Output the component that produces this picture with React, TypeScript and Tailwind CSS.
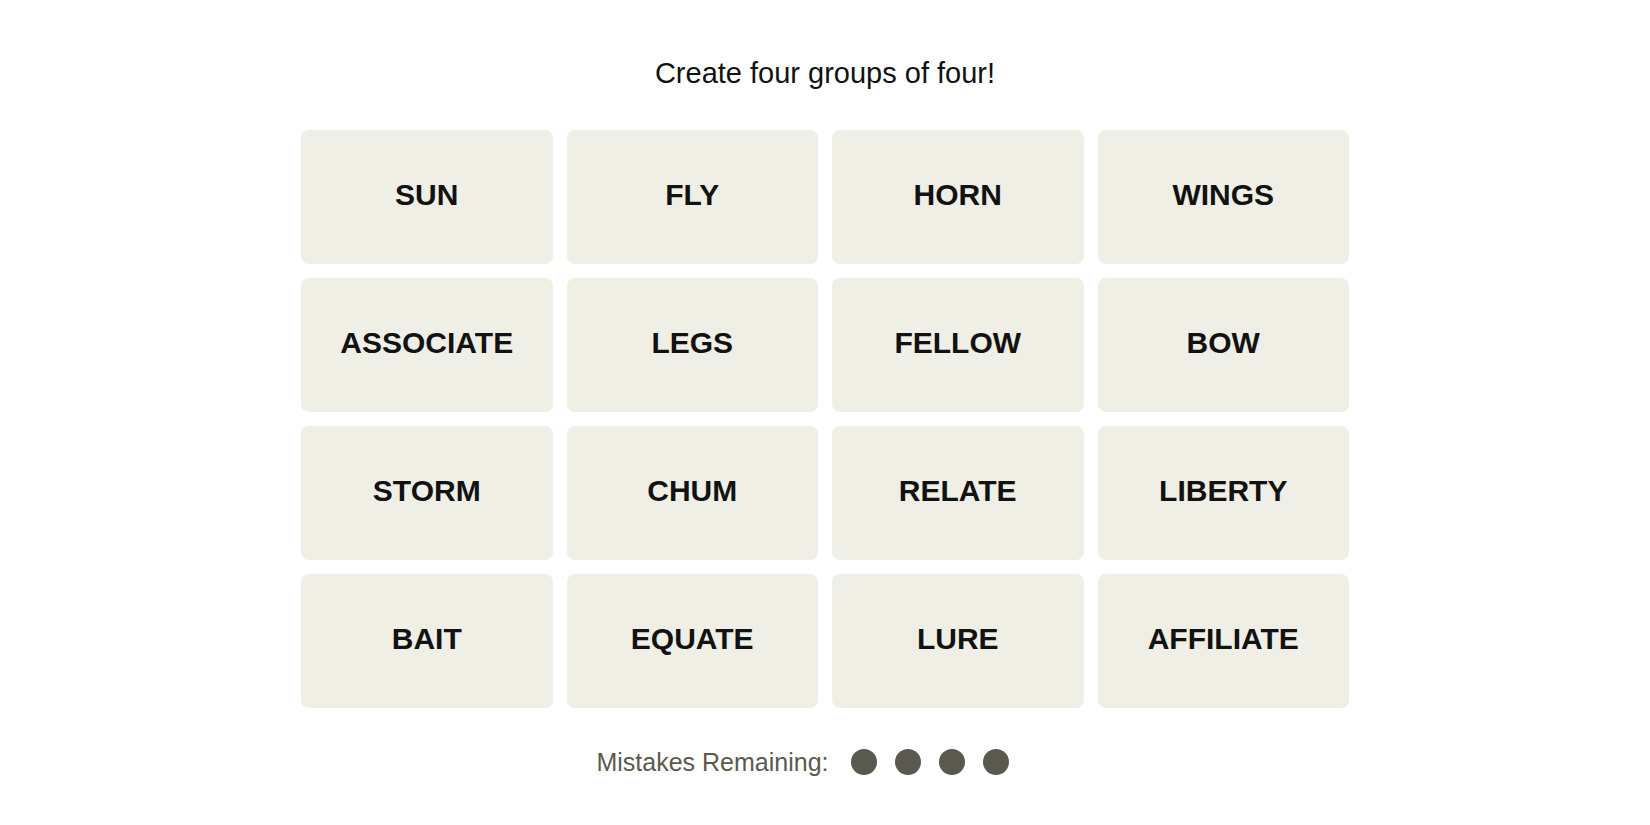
const words = [
  'SUN', 'FLY', 'HORN', 'WINGS',
  'ASSOCIATE', 'LEGS', 'FELLOW', 'BOW',
  'STORM', 'CHUM', 'RELATE', 'LIBERTY',
  'BAIT', 'EQUATE', 'LURE', 'AFFILIATE',
];

export default function App() {
  return (
    <div className="flex min-h-screen w-full flex-col items-center bg-white font-['Liberation_Sans',Arial,sans-serif] text-[#121212]">
      {/* heading */}
      <p className="mt-[55px] h-9 text-[29px] leading-9">Create four groups of four!</p>

      {/* board */}
      <div className="mt-[39px] grid w-[1048px] grid-cols-4 gap-[14px]">
        {words.map((w) => (
          <button
            key={w}
            className="flex h-[134px] items-center justify-center rounded-lg bg-[#efefe6] pb-[5px] text-[30px] font-bold uppercase text-[#121212]"
          >
            {w}
          </button>
        ))}
      </div>

      {/* mistakes */}
      <div className="mt-[41px] flex h-[26px] items-center pr-[45px]">
        <span className="text-[25px] leading-none text-[#5a594e]">Mistakes Remaining:</span>
        <div className="ml-[22px] flex gap-[18px]">
          {[0, 1, 2, 3].map((i) => (
            <span key={i} className="h-[26px] w-[26px] rounded-full bg-[#5a594e]" />
          ))}
        </div>
      </div>
    </div>
  );
}
